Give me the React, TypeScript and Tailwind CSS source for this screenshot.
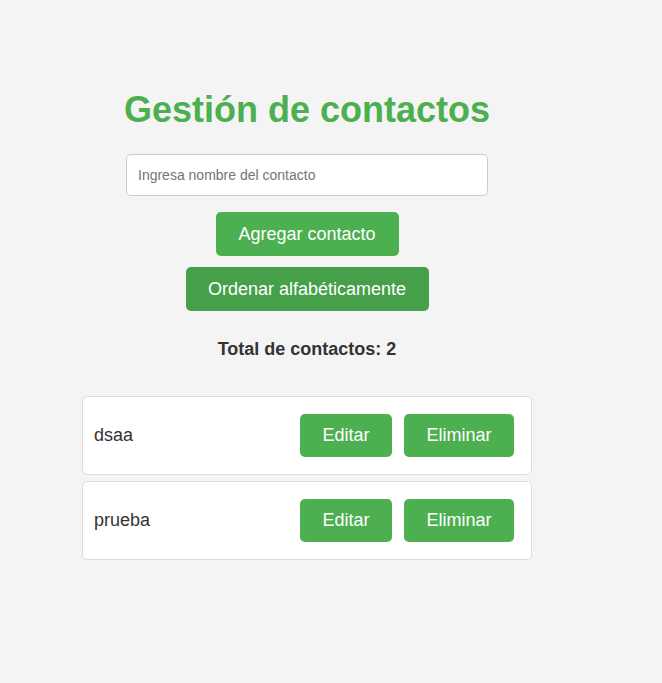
import { useState } from "react";

type Contact = { id: number; name: string };

export default function App() {
  const [name, setName] = useState("");
  const [contacts, setContacts] = useState<Contact[]>([
    { id: 1, name: "dsaa" },
    { id: 2, name: "prueba" },
  ]);

  const addContact = () => {
    if (!name.trim()) return;
    setContacts([...contacts, { id: Date.now(), name: name.trim() }]);
    setName("");
  };

  const sortContacts = () => {
    setContacts([...contacts].sort((a, b) => a.name.localeCompare(b.name)));
  };

  const removeContact = (id: number) => {
    setContacts(contacts.filter((c) => c.id !== id));
  };

  return (
    <div
      className="min-h-[683px] w-full bg-[#f4f4f4] text-[#333]"
      style={{ fontFamily: '"Liberation Sans", Arial, sans-serif' }}
    >
      <div className="ml-[82px] flex w-[450px] flex-col items-center pt-[89px]">
        <h1 className="text-[36px] font-bold leading-[41px] text-[#4caf50]">
          Gestión de contactos
        </h1>
        <input
          type="text"
          value={name}
          onChange={(e) => setName(e.target.value)}
          placeholder="Ingresa nombre del contacto"
          className="mt-[24px] h-[42px] w-[362px] rounded-[5px] border border-[#ccc] bg-white px-[11px] text-[14px] text-[#333] placeholder:text-[#757575] focus:outline-none"
        />
        <button
          onClick={addContact}
          className="mt-[16px] h-[44px] w-[183px] rounded-[5px] bg-[#4caf50] text-[18px] text-white"
        >
          Agregar contacto
        </button>
        <button
          onClick={sortContacts}
          className="mt-[11px] h-[44px] w-[243px] rounded-[5px] bg-[#45a049] text-[18px] text-white"
        >
          Ordenar alfabéticamente
        </button>
        <p className="mt-[28px] text-[18px] font-bold leading-[21px] text-[#333]">
          Total de contactos: {contacts.length}
        </p>
        <ul className="mt-[36px] flex w-full flex-col gap-[6px]">
          {contacts.map((c) => (
            <li
              key={c.id}
              className="flex h-[79px] items-center justify-between rounded-[5px] border border-[#ddd] bg-white pl-[11px] pr-[17px]"
            >
              <span className="text-[18px] text-[#333]">{c.name}</span>
              <div className="flex gap-[12px]">
                <button className="h-[43px] w-[92px] rounded-[5px] bg-[#4caf50] text-[18px] text-white">
                  Editar
                </button>
                <button
                  onClick={() => removeContact(c.id)}
                  className="h-[43px] w-[110px] rounded-[5px] bg-[#4caf50] text-[18px] text-white"
                >
                  Eliminar
                </button>
              </div>
            </li>
          ))}
        </ul>
      </div>
    </div>
  );
}
